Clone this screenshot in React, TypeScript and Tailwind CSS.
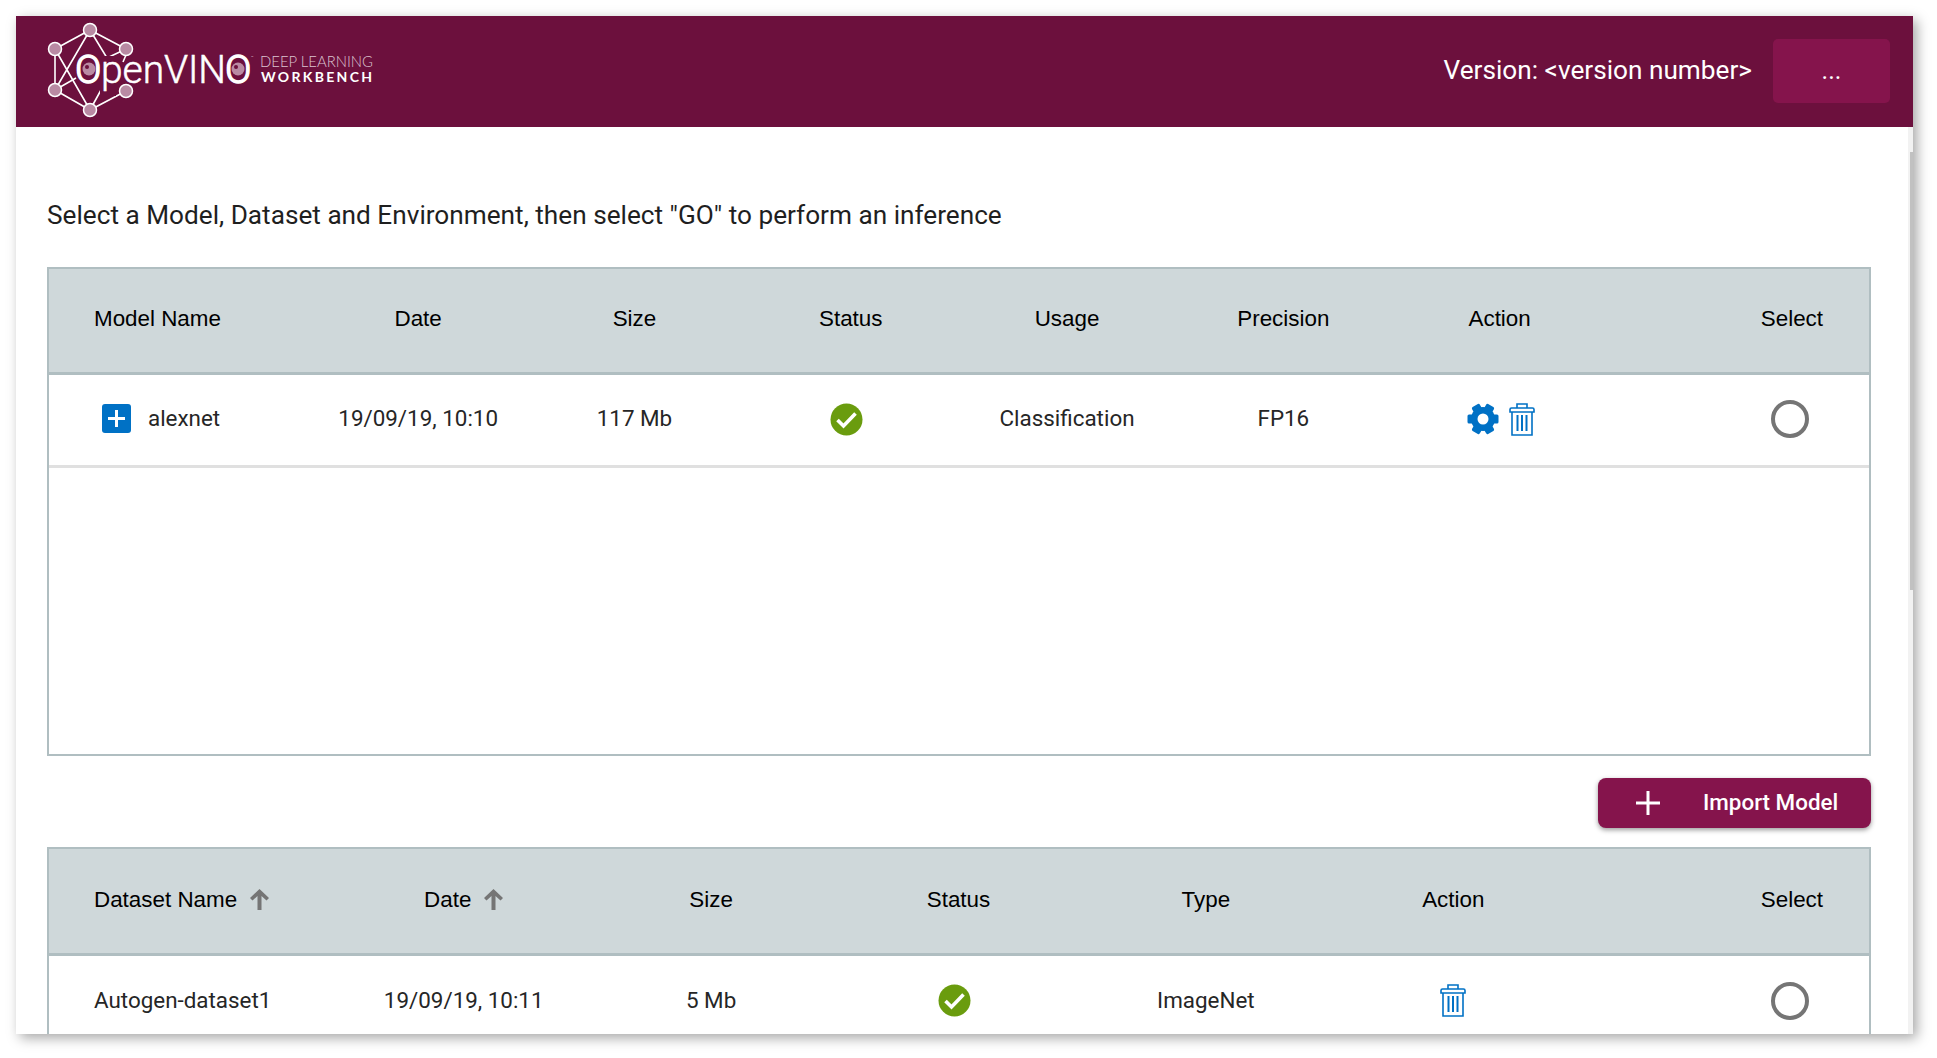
const modelCols = [
  { label: 'Date', value: '19/09/19, 10:10' },
  { label: 'Size', value: '117 Mb' },
];

function Logo() {
  return (
    <svg width="340" height="111" viewBox="0 0 340 111" className="shrink-0">
      <g stroke="#ffffff" strokeWidth="1.6" fill="none">
        <path d="M15 33L50 14L86 33M15 33V74M15 74L50 94L86 75M50 14L15 74M15 33L50 94" />
        <path d="M50 14L67 42L86 33M15 74L36 62M50 94L61 74M86 39L83 46" />
      </g>
      <circle cx="49" cy="53" r="15" fill="#6c103d" />
      <rect x="60" y="40" width="16" height="40" fill="#6c103d" />
      <g fill="#b98aa3" stroke="#ffffff" strokeWidth="1.5">
        <circle cx="50" cy="14" r="6.5" />
        <circle cx="86" cy="33" r="6.5" />
        <circle cx="15" cy="33" r="6.5" />
        <circle cx="15" cy="74" r="6.5" />
        <circle cx="86" cy="75" r="6.5" />
        <circle cx="50" cy="94" r="6.5" />
      </g>
      <text y="67" fill="#ffffff" fontSize="39" fontWeight="300" fontFamily="Roboto, sans-serif">
        <tspan x="35" stroke="#ffffff" strokeWidth="1.4">O</tspan>
        <tspan x="61" stroke="#ffffff" strokeWidth="0.5" textLength="125">penVIN</tspan>
        <tspan x="185" stroke="#ffffff" strokeWidth="1.4">O</tspan>
      </text>
      <circle cx="49" cy="53" r="6.5" fill="#b98aa3" />
      <circle cx="198" cy="53" r="6.5" fill="#b98aa3" />
      <circle cx="47" cy="51" r="2" fill="#6c103d" />
      <circle cx="196" cy="51" r="2" fill="#6c103d" />
      <text x="211" y="43" fill="#dcc3d0" fontSize="4" fontFamily="Roboto, sans-serif">™</text>
      <text x="220" y="51" fill="#dcc3d0" fontSize="16" fontWeight="300" textLength="113" lengthAdjust="spacingAndGlyphs" fontFamily="Lato, sans-serif">DEEP LEARNING</text>
      <text x="221" y="66" fill="#ffffff" fontSize="14" fontWeight="700" textLength="111" fontFamily="Lato, sans-serif">WORKBENCH</text>
    </svg>
  );
}

function PlusBox() {
  return (
    <div className="w-[29px] h-[29px] rounded-[3px] bg-[#0071c5] flex items-center justify-center shrink-0">
      <svg width="17" height="17" viewBox="0 0 17 17">
        <path d="M7 0h3v7h7v3h-7v7H7v-7H0V7h7z" fill="#ffffff" />
      </svg>
    </div>
  );
}

function CheckIcon() {
  return (
    <svg width="33" height="33" viewBox="0 0 33 33">
      <circle cx="16.5" cy="16.5" r="16" fill="#6a9c0e" />
      <path d="M7.500 17l6 6L25.500 10.500" fill="none" stroke="#ffffff" strokeWidth="3.6" />
    </svg>
  );
}

function GearIcon() {
  return (
    <svg width="32" height="32" viewBox="0 0 32 32">
      <g fill="#0071c5">
        <circle cx="16" cy="16" r="12" />
        <rect x="11.5" y="0.5" width="9" height="8" rx="1.5" transform="rotate(30 16 16)" />
        <rect x="11.5" y="0.5" width="9" height="8" rx="1.5" transform="rotate(90 16 16)" />
        <rect x="11.5" y="0.5" width="9" height="8" rx="1.5" transform="rotate(150 16 16)" />
        <rect x="11.5" y="0.5" width="9" height="8" rx="1.5" transform="rotate(210 16 16)" />
        <rect x="11.5" y="0.5" width="9" height="8" rx="1.5" transform="rotate(270 16 16)" />
        <rect x="11.5" y="0.5" width="9" height="8" rx="1.5" transform="rotate(330 16 16)" />
      </g>
      <circle cx="16" cy="16" r="5.5" fill="#ffffff" />
    </svg>
  );
}

function TrashIcon() {
  return (
    <svg width="26" height="33" viewBox="0 0 26 33" fill="none" stroke="#0071c5" strokeWidth="1.6">
      <path d="M8 5V1h10v4" />
      <path d="M1 9V6.500C1 5.500 1.500 5 2.500 5h21c1 0 1.500.5 1.500 1.500V9z" />
      <path d="M3 9v23h20V9" />
      <path d="M8.500 12v16M13 12v16M17.500 12v16" strokeWidth="2" />
    </svg>
  );
}

function SortArrow() {
  return (
    <svg width="19" height="21" viewBox="0 0 19 21" className="shrink-0">
      <path d="M9.500 0L19 9L16.500 11.500L11.500 7V21H7.500V7L2.500 11.500L0 9Z" fill="#757575" />
    </svg>
  );
}

function Radio() {
  return <div className="w-[38px] h-[38px] rounded-full border-4 border-[#757575] bg-white" />;
}

export default function App() {
  return (
    <div className="w-[1937px] h-[1058px] bg-white pt-4 pl-4 overflow-hidden font-['Roboto',sans-serif]">
      <div className="w-[1897px] h-[1018px] flex flex-col bg-white overflow-hidden shadow-[4px_4px_12px_rgba(0,0,0,0.35)]">
        {/* Header */}
        <header className="h-[111px] shrink-0 bg-[#6c103d] flex items-center pl-6 pr-[23px] text-white">
          <Logo />
          <span className="ml-auto mb-[2px] text-[26.2px]">Version: &lt;version number&gt;</span>
          <button className="ml-[21px] mb-[2px] w-[117px] h-[64px] rounded-[5px] bg-[#85144c] text-[25px]">...</button>
        </header>

        <div className="flex flex-1 min-h-0">
          <main className="flex-1 min-w-0 pl-[31px] pr-[37px]">
            <p className="mt-[72px] h-[34px] flex items-center text-[26.2px] text-[#1f1f1f]">
              Select a Model, Dataset and Environment, then select "GO" to perform an inference
            </p>

            {/* Models */}
            <section className="mt-[34px] h-[489px] border-2 border-[#b0bec1]">
              <div className="h-[106px] pb-[3px] bg-[#cfd8da] border-b-[3px] border-[#b0bec1] grid grid-cols-[261px_repeat(6,216.3px)_1fr] items-center text-center text-[22.4px] text-black font-['Liberation_Sans',sans-serif]">
                <div className="pl-[45px] text-left">Model Name</div>
                {modelCols.map((c) => (
                  <div key={c.label}>{c.label}</div>
                ))}
                <div>Status</div>
                <div>Usage</div>
                <div>Precision</div>
                <div>Action</div>
                <div className="text-right pr-[46px]">Select</div>
              </div>
              <div className="h-[93px] pb-[2px] border-b-[3px] border-[#e0e0e0] grid grid-cols-[261px_repeat(6,216.3px)_1fr] items-center text-center text-[22.4px] text-[#262626]">
                <div className="pl-[53px] flex items-center gap-[17px] text-left">
                  <PlusBox />
                  alexnet
                </div>
                {modelCols.map((c) => (
                  <div key={c.label}>{c.value}</div>
                ))}
                <div className="flex justify-center pr-2">
                  <CheckIcon />
                </div>
                <div>Classification</div>
                <div>FP16</div>
                <div className="flex justify-center gap-[10px] pl-[2px]">
                  <GearIcon />
                  <TrashIcon />
                </div>
                <div className="flex justify-end pr-[60px]">
                  <Radio />
                </div>
              </div>
            </section>

            <div className="mt-[22px] flex justify-end">
              <button className="w-[273px] h-[50px] rounded-lg bg-[#85144c] text-white text-[22.4px] font-medium flex items-center pl-[38px] shadow-[0_2px_5px_rgba(0,0,0,0.4)]">
                <svg width="24" height="24" viewBox="0 0 24 24" className="shrink-0">
                  <path d="M10.500 0h3v10.500H24v3H13.500V24h-3V13.500H0v-3h10.500z" fill="#ffffff" />
                </svg>
                <span className="ml-[43px]">Import Model</span>
              </button>
            </div>

            {/* Datasets */}
            <section className="mt-[19px] border-2 border-b-0 border-[#b0bec1]">
              <div className="h-[107px] pb-[2px] bg-[#cfd8da] border-b-[3px] border-[#b0bec1] grid grid-cols-[291px_repeat(5,247.4px)_1fr] items-center text-center text-[22.4px] text-black font-['Liberation_Sans',sans-serif]">
                <div className="pl-[45px] flex items-center gap-[13px]">
                  Dataset Name
                  <SortArrow />
                </div>
                <div className="flex items-center justify-center gap-[13px]">
                  Date
                  <SortArrow />
                </div>
                <div>Size</div>
                <div>Status</div>
                <div>Type</div>
                <div>Action</div>
                <div className="text-right pr-[46px]">Select</div>
              </div>
              <div className="h-[92px] pb-[3px] grid grid-cols-[291px_repeat(5,247.4px)_1fr] items-center text-center text-[22.4px] text-[#262626]">
                <div className="pl-[45px] text-left">Autogen-dataset1</div>
                <div>19/09/19, 10:11</div>
                <div>5 Mb</div>
                <div className="flex justify-center pr-2">
                  <CheckIcon />
                </div>
                <div>ImageNet</div>
                <div className="flex justify-center">
                  <TrashIcon />
                </div>
                <div className="flex justify-end pr-[60px]">
                  <Radio />
                </div>
              </div>
            </section>
          </main>

          {/* Scrollbar */}
          <div className="w-[5px] shrink-0 bg-[#f2f2f2] pt-[25px] flex justify-end">
            <div className="w-[3px] h-[438px] bg-[#c1c1c1]" />
          </div>
        </div>
      </div>
    </div>
  );
}
